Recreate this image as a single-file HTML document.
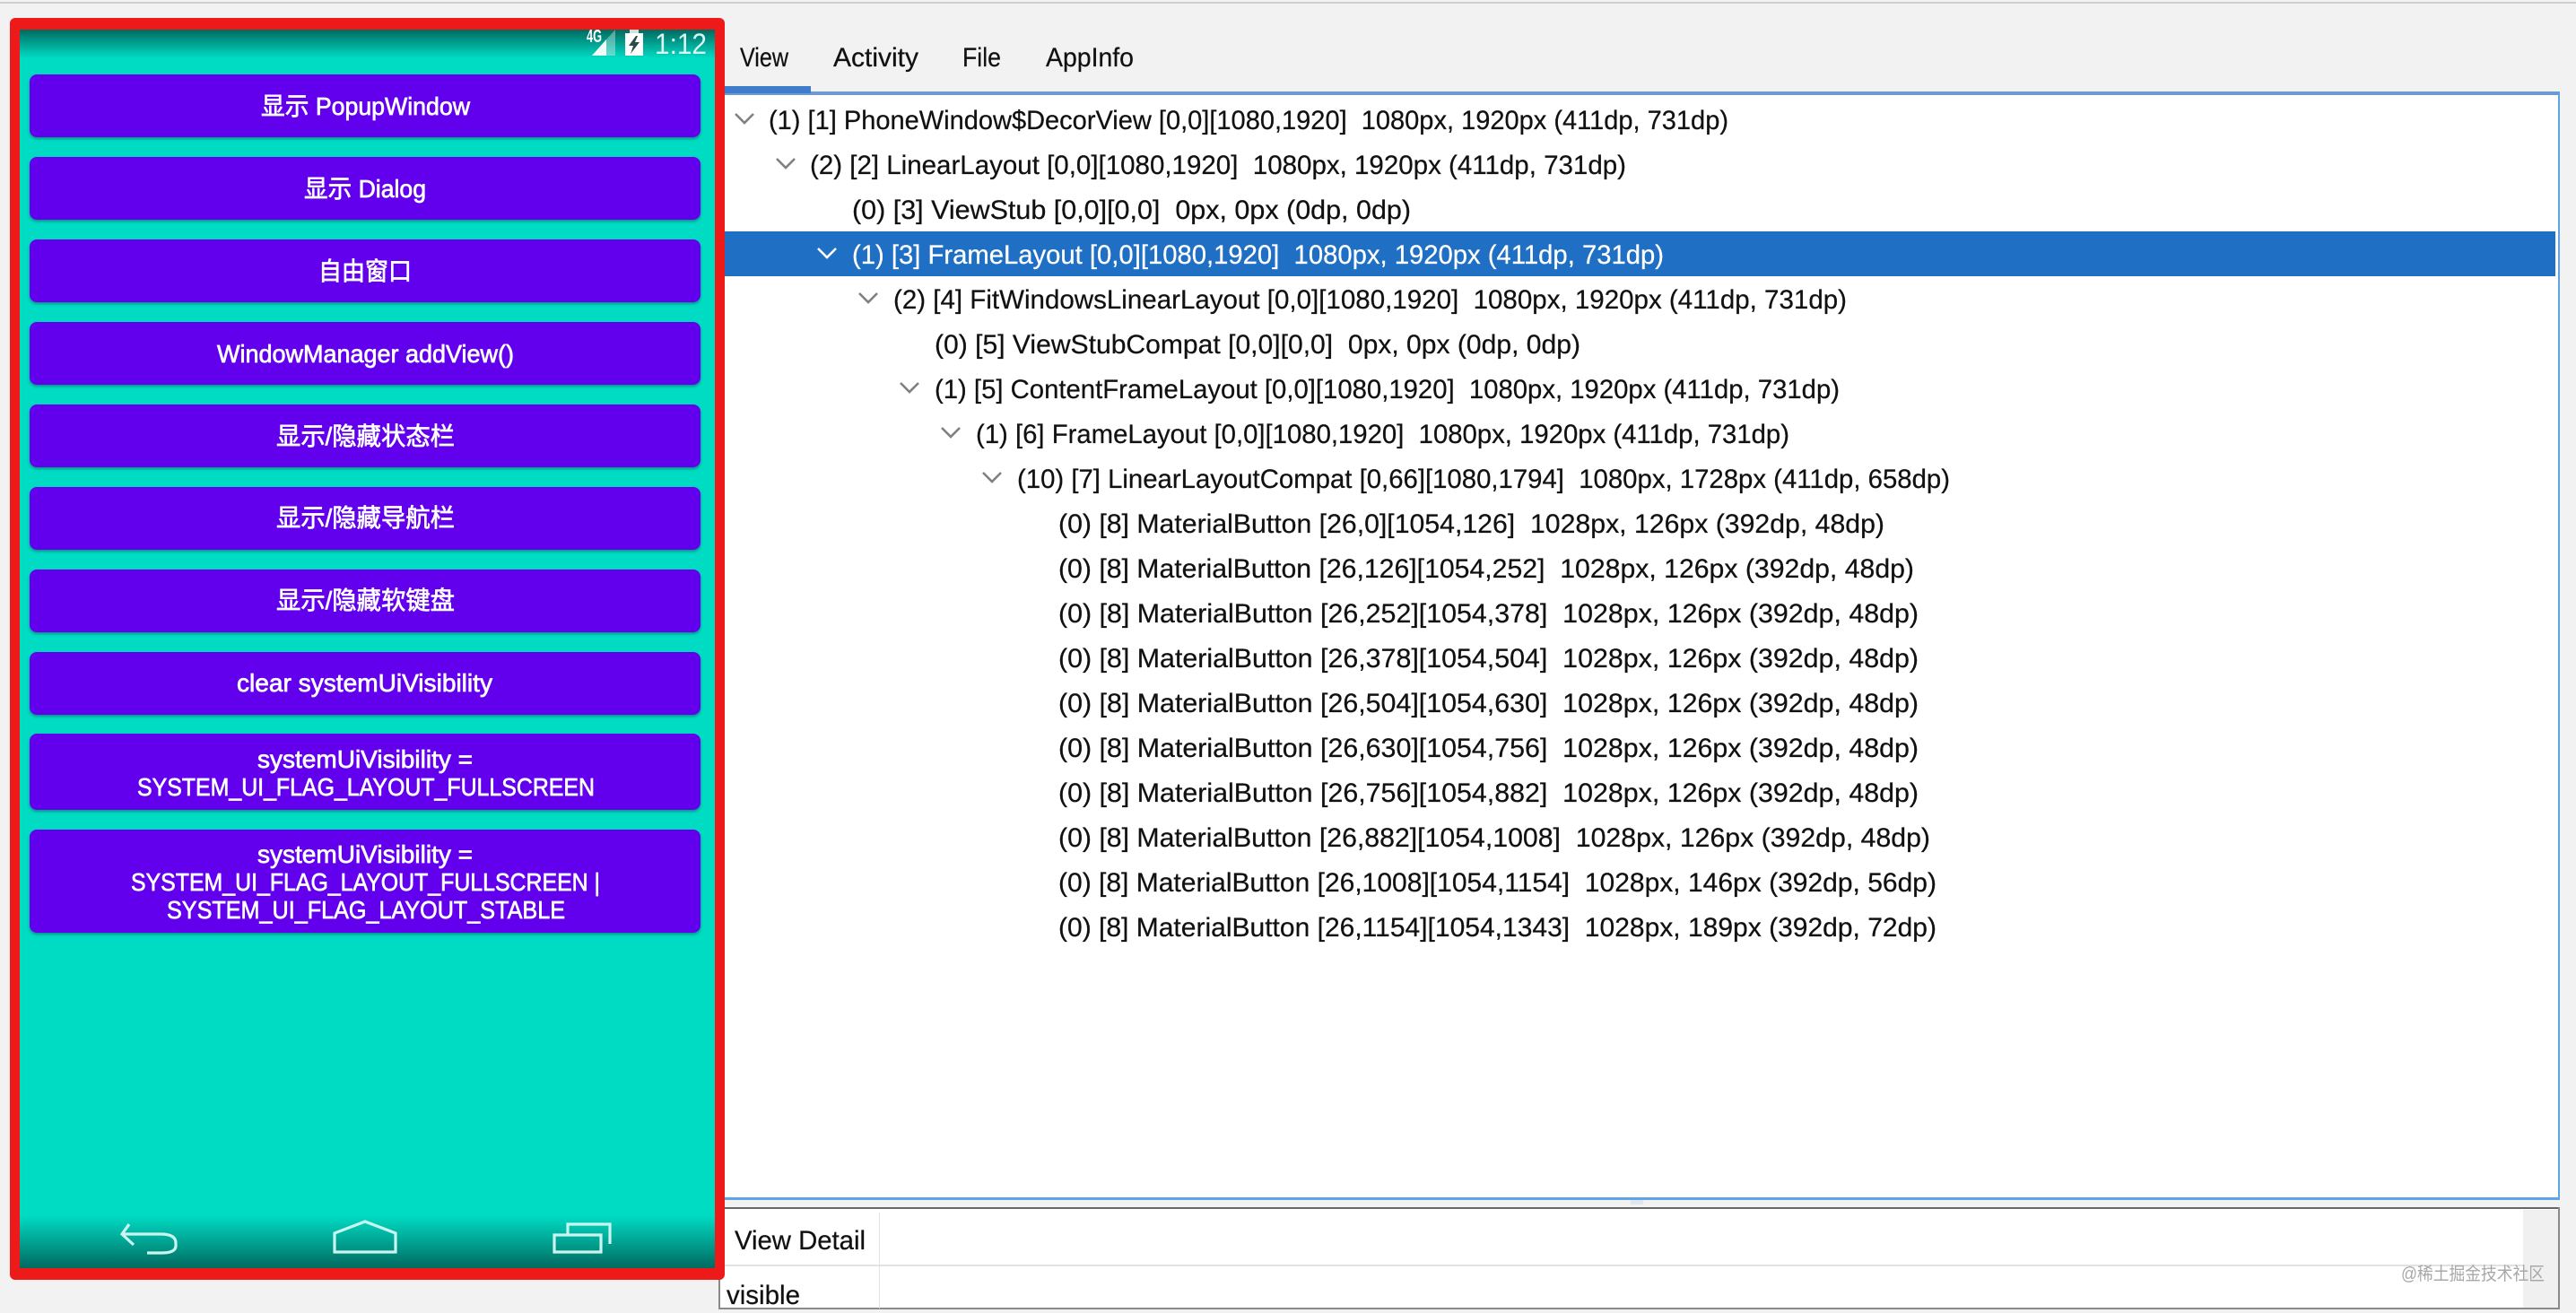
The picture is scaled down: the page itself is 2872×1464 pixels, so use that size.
<!DOCTYPE html>
<html><head><meta charset="utf-8"><style>
html,body{margin:0;padding:0;background:#f2f2f2;width:2872px;height:1464px;overflow:hidden}
svg{display:block}
text{white-space:pre}
.t{font-family:"Liberation Sans","Noto Sans CJK SC",sans-serif;font-size:30px;fill:#111;stroke:#111;stroke-width:.25px}
.b{font-family:"Liberation Sans","Noto Sans CJK SC",sans-serif;font-size:28px;fill:#fff;stroke:#fff;stroke-width:.7px;text-anchor:start}
.ch{fill:none;stroke:#808080;stroke-width:2.6}
.btn{fill:#6200ee;filter:url(#sh)}
</style></head><body>
<svg width="2872" height="1464" viewBox="0 0 2872 1464" xmlns="http://www.w3.org/2000/svg">
<defs>
<linearGradient id="gt" x1="0" y1="0" x2="0" y2="1"><stop offset="0" stop-color="#006a60"/><stop offset="1" stop-color="#00dcc4"/></linearGradient>
<linearGradient id="gb" x1="0" y1="0" x2="0" y2="1"><stop offset="0" stop-color="#00dcc4"/><stop offset="1" stop-color="#006a60"/></linearGradient>
<filter id="sh" x="-2%" y="-10%" width="104%" height="125%"><feDropShadow dx="0" dy="2" stdDeviation="1.5" flood-color="#005a55" flood-opacity=".55"/></filter>
</defs>
<rect width="2872" height="1464" fill="#f2f2f2"/>
<rect x="0" y="2" width="2872" height="2" fill="#cfcfcf"/>

<!-- tree panel -->
<rect x="800" y="102" width="2054" height="1236" fill="#fff"/>
<rect x="800" y="102" width="2054" height="4" fill="#6d9bd0"/>
<rect x="800" y="96" width="104" height="8" fill="#3f7ccb"/>
<rect x="2852" y="102" width="2" height="1236" fill="#5fa5e6"/>
<rect x="800" y="1335" width="2054" height="3" fill="#5fa5e6"/>
<rect x="1818" y="1338" width="14" height="5" fill="#dfe6ee"/>
<text class="t" x="825" y="74" textLength="54" lengthAdjust="spacingAndGlyphs">View</text>
<text class="t" x="929" y="74" textLength="95" lengthAdjust="spacingAndGlyphs">Activity</text>
<text class="t" x="1073" y="74" textLength="43" lengthAdjust="spacingAndGlyphs">File</text>
<text class="t" x="1166" y="74" textLength="98" lengthAdjust="spacingAndGlyphs">AppInfo</text>

<rect x="808" y="258" width="2041" height="50" fill="#1f6fc4"/>
<path class="ch" d="M820 127L830 137L840 127"/>
<path class="ch" d="M866 177L876 187L886 177"/>
<path class="ch" style="stroke:#fff" d="M912 277L922 287L932 277"/>
<path class="ch" d="M958 327L968 337L978 327"/>
<path class="ch" d="M1004 427L1014 437L1024 427"/>
<path class="ch" d="M1050 477L1060 487L1070 477"/>
<path class="ch" d="M1096 527L1106 537L1116 527"/>

<text class="t" x="857" y="144" textLength="1070" lengthAdjust="spacingAndGlyphs">(1) [1] PhoneWindow$DecorView [0,0][1080,1920]  1080px, 1920px (411dp, 731dp)</text>
<text class="t" x="903" y="194" textLength="910" lengthAdjust="spacingAndGlyphs">(2) [2] LinearLayout [0,0][1080,1920]  1080px, 1920px (411dp, 731dp)</text>
<text class="t" x="950" y="244" textLength="623" lengthAdjust="spacingAndGlyphs">(0) [3] ViewStub [0,0][0,0]  0px, 0px (0dp, 0dp)</text>
<text class="t" style="fill:#fff;stroke:#fff" x="950" y="294" textLength="905" lengthAdjust="spacingAndGlyphs">(1) [3] FrameLayout [0,0][1080,1920]  1080px, 1920px (411dp, 731dp)</text>
<text class="t" x="996" y="344" textLength="1063" lengthAdjust="spacingAndGlyphs">(2) [4] FitWindowsLinearLayout [0,0][1080,1920]  1080px, 1920px (411dp, 731dp)</text>
<text class="t" x="1042" y="394" textLength="720" lengthAdjust="spacingAndGlyphs">(0) [5] ViewStubCompat [0,0][0,0]  0px, 0px (0dp, 0dp)</text>
<text class="t" x="1042" y="444" textLength="1009" lengthAdjust="spacingAndGlyphs">(1) [5] ContentFrameLayout [0,0][1080,1920]  1080px, 1920px (411dp, 731dp)</text>
<text class="t" x="1088" y="494" textLength="907" lengthAdjust="spacingAndGlyphs">(1) [6] FrameLayout [0,0][1080,1920]  1080px, 1920px (411dp, 731dp)</text>
<text class="t" x="1134" y="544" textLength="1040" lengthAdjust="spacingAndGlyphs">(10) [7] LinearLayoutCompat [0,66][1080,1794]  1080px, 1728px (411dp, 658dp)</text>
<text class="t" x="1180" y="594" textLength="921" lengthAdjust="spacingAndGlyphs">(0) [8] MaterialButton [26,0][1054,126]  1028px, 126px (392dp, 48dp)</text>
<text class="t" x="1180" y="644" textLength="954" lengthAdjust="spacingAndGlyphs">(0) [8] MaterialButton [26,126][1054,252]  1028px, 126px (392dp, 48dp)</text>
<text class="t" x="1180" y="694" textLength="959" lengthAdjust="spacingAndGlyphs">(0) [8] MaterialButton [26,252][1054,378]  1028px, 126px (392dp, 48dp)</text>
<text class="t" x="1180" y="744" textLength="959" lengthAdjust="spacingAndGlyphs">(0) [8] MaterialButton [26,378][1054,504]  1028px, 126px (392dp, 48dp)</text>
<text class="t" x="1180" y="794" textLength="959" lengthAdjust="spacingAndGlyphs">(0) [8] MaterialButton [26,504][1054,630]  1028px, 126px (392dp, 48dp)</text>
<text class="t" x="1180" y="844" textLength="959" lengthAdjust="spacingAndGlyphs">(0) [8] MaterialButton [26,630][1054,756]  1028px, 126px (392dp, 48dp)</text>
<text class="t" x="1180" y="894" textLength="959" lengthAdjust="spacingAndGlyphs">(0) [8] MaterialButton [26,756][1054,882]  1028px, 126px (392dp, 48dp)</text>
<text class="t" x="1180" y="944" textLength="972" lengthAdjust="spacingAndGlyphs">(0) [8] MaterialButton [26,882][1054,1008]  1028px, 126px (392dp, 48dp)</text>
<text class="t" x="1180" y="994" textLength="979" lengthAdjust="spacingAndGlyphs">(0) [8] MaterialButton [26,1008][1054,1154]  1028px, 146px (392dp, 56dp)</text>
<text class="t" x="1180" y="1044" textLength="979" lengthAdjust="spacingAndGlyphs">(0) [8] MaterialButton [26,1154][1054,1343]  1028px, 189px (392dp, 72dp)</text>

<!-- detail panel -->
<rect x="801" y="1348" width="2052" height="111" fill="#fff"/>
<rect x="2813" y="1349" width="39" height="110" fill="#f0f0f0"/>
<rect x="801" y="1346" width="2053" height="2" fill="#666"/>
<rect x="801" y="1458" width="2053" height="2" fill="#8a8a8a"/>
<rect x="801" y="1346" width="2" height="114" fill="#8a8a8a"/>
<rect x="2852" y="1346" width="2" height="114" fill="#8a8a8a"/>
<rect x="808" y="1410" width="2005" height="2" fill="#e2e2e2"/>
<rect x="980" y="1352" width="1" height="107" fill="#e2e2e2"/>
<text class="t" x="819" y="1393" textLength="146" lengthAdjust="spacingAndGlyphs">View Detail</text>
<text class="t" x="810" y="1454" textLength="82" lengthAdjust="spacingAndGlyphs">visible</text>
<text x="2677" y="1427" textLength="160" lengthAdjust="spacingAndGlyphs" style="font-family:'Liberation Sans','Noto Sans CJK SC',sans-serif;font-size:20px;fill:#a8a8a8">@稀土掘金技术社区</text>

<!-- phone -->
<rect x="11" y="20" width="797" height="1407" rx="6" fill="#ee1a1a"/>
<rect x="22" y="33" width="775" height="1381" fill="#00dcc4"/>
<rect x="22" y="33" width="775" height="32" fill="url(#gt)"/>
<rect x="22" y="1355" width="775" height="59" fill="url(#gb)"/>

<!-- status bar -->
<path d="M660 62L686 33V62Z" fill="#fff" opacity=".35"/>
<path d="M660 62L676 44V62Z" fill="#fff" opacity=".9"/>
<text x="654" y="47" textLength="17" lengthAdjust="spacingAndGlyphs" style="font-family:'Liberation Sans',sans-serif;font-size:20px;font-weight:bold;fill:#fff">4G</text>
<rect x="702" y="33" width="10" height="4" fill="#fff" opacity=".8"/>
<rect x="697" y="37" width="20" height="25" fill="#fff"/>
<path d="M709 40L701 51H706L703 60L713 47H708L711 40Z" fill="#2e4a48"/>
<text x="730" y="60" textLength="58" lengthAdjust="spacingAndGlyphs" style="font-family:'Liberation Sans',sans-serif;font-size:32px;fill:#d8f5f1">1:12</text>

<!-- buttons -->
<rect class="btn" x="33" y="83" width="748" height="70" rx="8"/>
<rect class="btn" x="33" y="175" width="748" height="70" rx="8"/>
<rect class="btn" x="33" y="267" width="748" height="70" rx="8"/>
<rect class="btn" x="33" y="359" width="748" height="70" rx="8"/>
<rect class="btn" x="33" y="451" width="748" height="70" rx="8"/>
<rect class="btn" x="33" y="543" width="748" height="70" rx="8"/>
<rect class="btn" x="33" y="635" width="748" height="70" rx="8"/>
<rect class="btn" x="33" y="727" width="748" height="70" rx="8"/>
<rect class="btn" x="33" y="818" width="748" height="85" rx="8"/>
<rect class="btn" x="33" y="925" width="748" height="115" rx="8"/>
<text class="b" x="291" y="128" textLength="233" lengthAdjust="spacingAndGlyphs">显示 PopupWindow</text>
<text class="b" x="339" y="220" textLength="136" lengthAdjust="spacingAndGlyphs">显示 Dialog</text>
<text class="b" x="355" y="312" textLength="104" lengthAdjust="spacingAndGlyphs">自由窗口</text>
<text class="b" x="242" y="404" textLength="331" lengthAdjust="spacingAndGlyphs">WindowManager addView()</text>
<text class="b" x="308" y="496" textLength="199" lengthAdjust="spacingAndGlyphs">显示/隐藏状态栏</text>
<text class="b" x="308" y="587" textLength="199" lengthAdjust="spacingAndGlyphs">显示/隐藏导航栏</text>
<text class="b" x="308" y="679" textLength="199" lengthAdjust="spacingAndGlyphs">显示/隐藏软键盘</text>
<text class="b" x="264" y="771" textLength="285" lengthAdjust="spacingAndGlyphs">clear systemUiVisibility</text>
<text class="b" x="287" y="856" textLength="240" lengthAdjust="spacingAndGlyphs">systemUiVisibility =</text>
<text class="b" x="153" y="887" textLength="510" lengthAdjust="spacingAndGlyphs">SYSTEM_UI_FLAG_LAYOUT_FULLSCREEN</text>
<text class="b" x="287" y="962" textLength="240" lengthAdjust="spacingAndGlyphs">systemUiVisibility =</text>
<text class="b" x="146" y="993" textLength="523" lengthAdjust="spacingAndGlyphs">SYSTEM_UI_FLAG_LAYOUT_FULLSCREEN |</text>
<text class="b" x="186" y="1024" textLength="444" lengthAdjust="spacingAndGlyphs">SYSTEM_UI_FLAG_LAYOUT_STABLE</text>

<!-- nav -->
<g fill="none" stroke="#c9f5f0" stroke-width="3.2">
<path d="M144 1365L136 1376L149 1388M136 1376H179Q196 1376 196 1386V1389Q196 1397 180 1397H164"/>
<path d="M373 1396V1375L407 1362L441 1375V1396Z"/>
<path d="M618 1377H670V1396H618Z"/>
<path d="M633 1376V1365H680V1387"/>
</g>
</svg>
</body></html>
